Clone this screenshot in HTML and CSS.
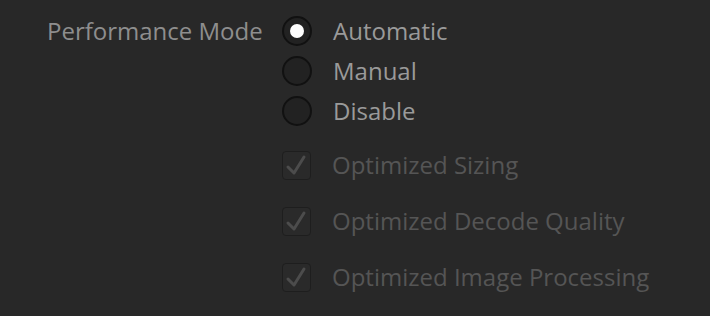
FILE: index.html
```html
<!DOCTYPE html>
<html lang="en">
<head>
    <meta charset="UTF-8">
    <title>Performance Mode</title>
    <link rel="stylesheet" href="styles.css">
</head>
<body>
    <div class="row">
        <div class="label">Performance Mode</div>
        <div class="options">
            <label class="radio">
                <input type="radio" name="mode" checked>
                <span class="dot"></span>
                <span class="text">Automatic</span>
            </label>
            <label class="radio">
                <input type="radio" name="mode">
                <span class="dot"></span>
                <span class="text">Manual</span>
            </label>
            <label class="radio">
                <input type="radio" name="mode">
                <span class="dot"></span>
                <span class="text">Disable</span>
            </label>

            <div class="checks">
                <label class="check">
                    <span class="box"><svg viewBox="0 0 28 28" width="28" height="28"><path d="M6 16 L12 22 L22 6"/></svg></span>
                    <span class="text">Optimized Sizing</span>
                </label>
                <label class="check">
                    <span class="box"><svg viewBox="0 0 28 28" width="28" height="28"><path d="M6 16 L12 22 L22 6"/></svg></span>
                    <span class="text">Optimized Decode Quality</span>
                </label>
                <label class="check">
                    <span class="box"><svg viewBox="0 0 28 28" width="28" height="28"><path d="M6 16 L12 22 L22 6"/></svg></span>
                    <span class="text">Optimized Image Processing</span>
                </label>
            </div>
        </div>
    </div>
</body>
</html>
```

FILE: styles.css
```css
body {
    margin: 0;
    background: #282828;
    font-family: "Open Sans", sans-serif;
    font-size: 24px;
    color: #9a9a9a;
}
.row {
    display: flex;
    padding: 16px 0 0 47px;
}
.label {
    width: 235px;
    line-height: 30px;
    color: #8e8e8e;
}
.options {
    display: flex;
    flex-direction: column;
}
.radio, .check {
    display: flex;
    align-items: center;
    height: 30px;
    line-height: 30px;
    margin-bottom: 10px;
}
.radio input {
    display: none;
}
.dot {
    box-sizing: border-box;
    width: 30px;
    height: 30px;
    border-radius: 50%;
    border: 2px solid #111;
    background: #222;
    display: flex;
    align-items: center;
    justify-content: center;
    margin-right: 21px;
}
input:checked + .dot::after {
    content: '';
    width: 14px;
    height: 14px;
    border-radius: 50%;
    background: #fff;
}
.checks {
    margin-top: 1px;
}
.check {
    height: 56px;
    margin: 0;
}
.box {
    box-sizing: border-box;
    width: 29px;
    height: 29px;
    margin: 0 21px 0 0;
    border-radius: 4px;
    border: 1px solid #1e1e1e;
    background: #2a2a2a;
}
.box svg {
    display: block;
    margin: -1px;
}
.box path {
    fill: none;
    stroke: #4c4c4c;
    stroke-width: 3;
    stroke-linecap: round;
    stroke-linejoin: round;
}
.check .text {
    color: #555;
}
```
